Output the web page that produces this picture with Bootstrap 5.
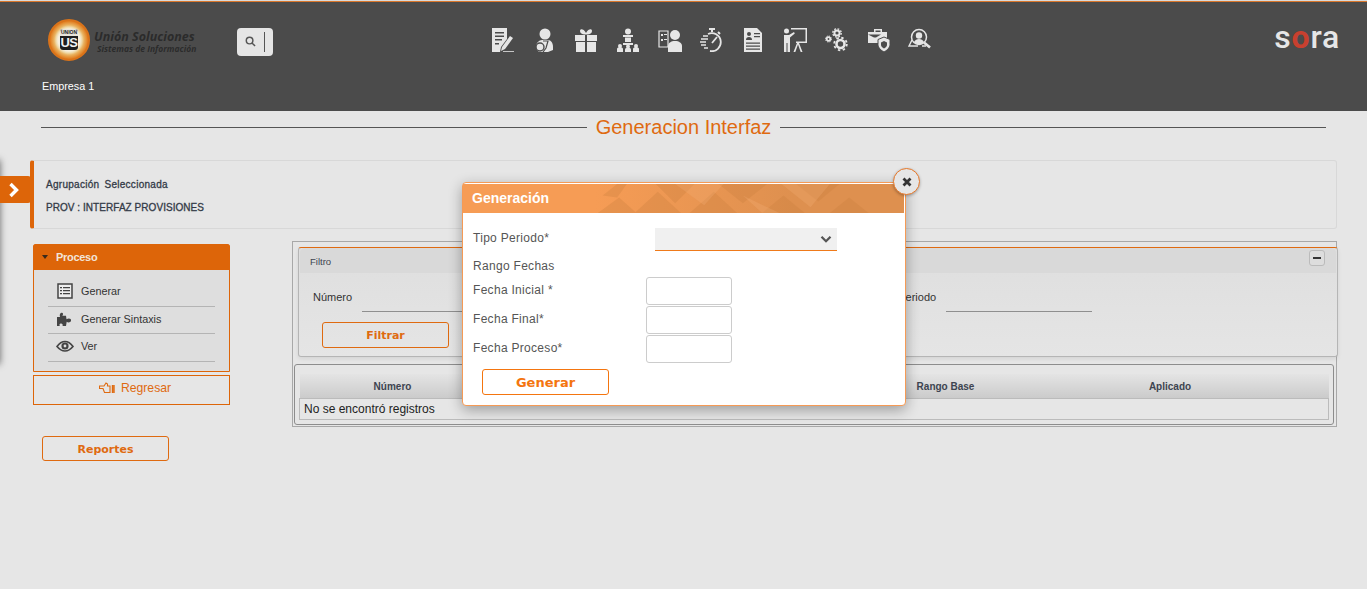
<!DOCTYPE html>
<html lang="es">
<head>
    <meta charset="UTF-8">
    <title>Generacion Interfaz</title>
    <link rel="stylesheet" href="https://cdn.jsdelivr.net/npm/bootstrap@5.3.0/dist/css/bootstrap.min.css">
    <style>
        body { background: #e6e6e6; font-family: "Liberation Sans", Arial, sans-serif; font-size: 12px; color: #333; position: relative; height: 589px; overflow: hidden; }
        .top-bar { height: 111px; background: #4b4b4b; border-top: 1px solid #d9d9d9; box-shadow: inset 0 1px 0 #d9772c; padding: 0 27px 0 42px; }
        .top-row { height: 77px; }
        .brand { width: 195px; margin-left: 6px; gap: 4px; }
        .brand-disc { width: 42px; height: 42px; flex: none; border-radius: 50%; background: radial-gradient(circle, #f6efdd 0 11px, #efd9a8 13px, #e9b25f 15px, #e07a1c 19px); border: 2px solid #d9731a; }
        .brand-mark { width: 18px; height: 21px; background: #1f1f1f; border-radius: 3px; overflow: hidden; text-align: center; }
        .brand-mark small { display: block; background: #e8e4da; color: #222; font-size: 5px; line-height: 7px; font-weight: 700; }
        .brand-mark span { display: block; color: #f2f2f2; font-size: 13px; line-height: 14px; font-weight: 700; letter-spacing: -.5px; }
        .brand-txt { margin-top: 4px; }
        .brand-name { color: #2b2b2b; font-weight: 700; font-style: italic; font-size: 12.5px; line-height: 13px; font-family: "Open Sans", sans-serif; white-space: nowrap; letter-spacing: 0; }
        .brand-sub { color: #2b2b2b; font-size: 8.5px; line-height: 11px; font-style: italic; font-weight: 700; font-family: "Open Sans", sans-serif; white-space: nowrap; margin-left: 3px; }
        .search-box { width: 36px; height: 28px; margin-left: -6px; margin-top: 4px; background: #e5e5e5; border-radius: 4px; padding-left: 8px; }
        .search-sep { width: 1px; height: 20px; background: #555; margin-left: 8px; }
        .menu-icons { gap: 17.8px; position: absolute; left: 490.5px; top: 27.5px; }
        .menu-icons svg { width: 24px; height: 24px; display: block; fill: #e6e6e6; }
        .menu-icons svg.ic-line { fill: none; stroke: #e6e6e6; }
        .sora-word { margin-left: auto; margin-top: -6px; font-family: Roboto, sans-serif; font-weight: 500; font-size: 32px; line-height: 1; color: #e6e6e6; letter-spacing: .8px; }
        .sora-word b { color: #c8402f; font-weight: 700; }
        .empresa { color: #fff; font-size: 10.8px; line-height: 13px; padding-top: 2px; }
        .title-row { height: 32px; padding: 0 41px; gap: 9px; }
        .title-row hr { flex: 1; margin: 0; border-top: 1px solid #555; opacity: 1; }
        .title-row h1 { font-size: 20px; font-weight: 400; color: #df6a10; margin: 0; line-height: 32px; font-family: "Liberation Sans", sans-serif; }
        .wrap-main { margin: 17px 30px 0; }
        .agrup { height: 69px; border: 1px solid #d8d8d8; border-left: 4px solid #dd6509; border-radius: 3px; padding: 18px 12px 0; font-size: 10px; color: #333a46; line-height: 12px; -webkit-text-stroke: .3px #333a46; }
        .agrup p { margin: 0 0 11px; }
        .agrup .t1 { word-spacing: 2px; letter-spacing: .28px; }
        .agrup .t2 { letter-spacing: .05px; }
        .edge-tab { position: absolute; left: 0; top: 176px; width: 31px; height: 27px; background: #dd6509; border-radius: 0 3px 3px 0; padding-right: 3px; }
        .edge-shadow { position: absolute; left: -10px; top: 160px; width: 10px; height: 204px; box-shadow: 0 0 7px rgba(0,0,0,.55); }
        .left-col { width: 197px; margin: 3px 0 0 3px; }
        .proc-box { height: 128px; border: 1px solid #dd6509; border-radius: 3px 3px 0 0; background: #dedede; }
        .proc-head { height: 26px; margin: -1px -1px 0; background: #dd6509; border-radius: 3px 3px 0 0; padding-left: 9px; color: #f2e4d8; font-weight: 700; font-size: 11px; letter-spacing: -.3px; gap: 8px; }
        .proc-caret { width: 0; height: 0; border: 3.5px solid transparent; border-top: 4px solid #3a2a1c; border-bottom: 0; }
        .proc-list { margin: 9px 14px 0; background: transparent; border-radius: 0; }
        .proc-list .list-group-item { background: transparent; border: 0; border-bottom: 1px solid #b4b4b4; border-radius: 0; height: 27.5px; padding: 0 0 2px 8px; font-size: 10.8px; color: #333; gap: 7px; }
        .proc-list .list-group-item svg { width: 18px; height: 16px; flex: none; }
        .back-box { height: 30px; margin-top: 3px; border: 1px solid #dd6509; color: #df6a10; font-size: 12.2px; gap: 6px; padding: 0 0 4px 7px; }
        .btn-outl { width: 127px; font-family: "DejaVu Sans", sans-serif; font-weight: 700; font-size: 11px; line-height: 1; color: #df6a10; border: 1px solid #df6a10; border-radius: 3px; background: transparent; padding: 1px 0 0; }
        .btn-rep { height: 25px; margin: 31px 0 0 9px; display: block; }
        .right-col { width: 1045px; height: 186px; margin-left: 62px; border: 1px solid #a8a8a8; padding: 5px 0 0 5px; }
        .filter-card { width: 1040px; height: 110px; border: 1px solid #b5b5b5; border-top-color: #df6a10; border-radius: 3px; background: linear-gradient(#dedede, #e5e5e5); box-shadow: 0 2px 4px rgba(0,0,0,.08); display: block; }
        .filter-head { height: 25px; margin: 0 1px; background: #d9d9d9; font-size: 9.5px; color: #3d4450; padding: 3px 11px 0 10px; border: 0; border-radius: 0; }
        .collapse-btn { width: 16px; height: 16px; border: 1px solid #bbb; border-radius: 3px; background: #ddd; margin-top: -1px; }
        .collapse-btn i { width: 8px; height: 2px; background: #333; display: block; }
        .filter-fields { height: 49px; padding-left: 14px; position: relative; font-size: 11px; }
        .filter-fields label { line-height: 14px; padding-top: 17px; }
        .under-a { width: 160px; height: 39px; border-bottom: 1px solid #8f8f8f; margin-left: 10px; }
        .under-b { width: 146px; height: 39px; border-bottom: 1px solid #8f8f8f; margin-left: 10px; }
        .periodo-lbl { margin-left: 296px; width: 118px; text-align: right; }
        .btn-filt { height: 26px; margin-left: 23px; display: block; }
        .table-box { width: 1040px; height: 61px; margin: 7px 0 0 -4px; border: 1px solid #8d8d8d; border-radius: 3px; padding: 9px 4px 0; }
        .table-box .table { width: 1029px; margin: 0; table-layout: fixed; --bs-table-bg: transparent; border-color: #bbb; }
        .table-box th { height: 24px; padding: 2px 0 0; border: 0; background: linear-gradient(#e4e4e4, #cbcbcb); font-size: 10px; text-align: center; color: #3d4450; vertical-align: middle; }
        .table-box td { height: 21px; padding: 0 4px; border: 1px solid #bbb; font-size: 12px; color: #222; vertical-align: middle; }
        .gen-modal { position: absolute; left: 462px; top: 182px; width: 444px; height: 224px; background: #fff; border: 1px solid #f59a55; border-radius: 4px; box-shadow: 0 4px 14px rgba(0,0,0,.32); padding-top: 1px; font-size: 12px; color: #555; z-index: 5; letter-spacing: .3px; }
        .gen-head { height: 29px; margin: 0 1px 0 0; background: linear-gradient(90deg, #f69c55 30%, #de904f 75%); color: #fff; font-weight: 700; font-size: 14px; padding-left: 9px; position: relative; overflow: hidden; letter-spacing: 0; }
        .gen-head svg { position: absolute; left: 130px; top: 0; width: 290px; height: 29px; }
        .gen-head span { position: relative; }
        .gen-close { position: absolute; right: -15px; top: -15px; width: 27px; height: 27px; border-radius: 50%; background: #e6e6e6; border: 1px solid #e8792a; box-shadow: 0 1px 3px rgba(0,0,0,.3); }
        .gen-body { padding: 15px 0 0 10px; }
        .gen-tipo { height: 24px; }
        .gen-tipo label { width: 182px; padding-bottom: 5px; }
        .gen-tipo .form-select { width: 182px; height: 22px; margin-bottom: 2px; padding: 0 8px; background-color: #f0f0f0; background-image: url("data:image/svg+xml,%3csvg xmlns='http://www.w3.org/2000/svg' viewBox='0 0 16 16'%3e%3cpath fill='none' stroke='%23555' stroke-width='3' d='M2 5l6 6 6-6'/%3e%3c/svg%3e"); background-size: 12px 12px; border: 0; border-radius: 0; box-shadow: 0 1px 0 #ef7a1a; font-size: 12px; background-position: right 5px center; }
        .gen-rango { margin-top: 7px; height: 15px; line-height: 15px; }
        .gen-dates { margin-top: 3px; display: grid; grid-template-columns: 173px 86px; grid-auto-rows: 28px; row-gap: 1px; align-items: center; }
        .gen-dates label { padding-bottom: 2px; }
        .gen-dates .form-control { height: 28px; width: 86px; border: 1px solid #ccc; border-radius: 3px; min-height: 0; padding: 0; }
        .btn-gen { height: 26px; margin: 6px 0 0 9px; display: block; font-size: 13px; color: #f4750f; border-color: #f4750f; }
    </style>
</head>
<body>
    <div class="top-bar">
        <div class="top-row d-flex align-items-center">
            <div class="brand d-flex align-items-center">
                <div class="brand-disc d-flex align-items-center justify-content-center">
                    <div class="brand-mark"><small>UNION</small><span>US</span></div>
                </div>
                <div class="brand-txt">
                    <div class="brand-name">Unión Soluciones</div>
                    <div class="brand-sub">Sistemas de Información</div>
                </div>
            </div>
            <div class="search-box d-flex align-items-center">
                <svg width="11" height="11" viewBox="0 0 12 12" fill="none" stroke="#555" stroke-width="1.6"><circle cx="5" cy="5" r="3.6"/><path d="M7.6 7.6 11 11"/></svg>
                <span class="search-sep"></span>
            </div>
            <div class="menu-icons d-flex">
                <svg viewBox="0 0 24 24"><path d="M1 0h15v11l-6 8-1 5H1z"/><path d="M4 4h9v1.400H4zM4 7.500h9v1.400H4zM4 11h7v1.400H4zM4 15h4v1.400H4z" fill="#4b4b4b"/><path d="M19 8l3 2-8 11-4 2 1-4z"/><path d="M12 23h11v.8H12z"/></svg>
                <svg viewBox="0 0 24 24"><circle cx="13" cy="6" r="5.500"/><path d="M7 24c-2-2-3-3-3-5 0-4 3-7 6-7h6c3 0 5 3 5 7v3l-5 2z"/><circle cx="8" cy="19" r="4" fill="none" stroke="#4b4b4b" stroke-width="1.400"/><path d="M11 13l5 0-2 7-3 4" fill="none" stroke="#4b4b4b" stroke-width="1.200"/></svg>
                <svg viewBox="0 0 24 24"><path d="M1 7h10v6H1zM13 7h10v6H13zM2 14h9v10H2zM13 14h9v10h-9z"/><path d="M11 6.500C8 6.500 6 5 6 3 6 .5 9.500.5 12 5c2.500-4.500 6-4.500 6-2 0 2-2 3.500-5 3.500z"/></svg>
                <svg viewBox="0 0 24 24"><circle cx="12" cy="3.500" r="3"/><path d="M7 7h10v2H7zM9 9.500h6V14H9z"/><path d="M7 15h10v2H7z"/><circle cx="4" cy="18" r="2"/><path d="M1 21c0-1 1-2 3-2s3 1 3 2v3H1z"/><circle cx="12" cy="18.500" r="2"/><path d="M9 21.500c0-1 1-2 3-2s3 1 3 2V24H9z"/><circle cx="20" cy="18" r="2"/><path d="M17 21c0-1 1-2 3-2s3 1 3 2v3h-6z"/></svg>
                <svg viewBox="0 0 24 24"><circle cx="17" cy="7" r="5"/><path d="M10 24v-6c0-3 3-5 7-5s7 2 7 5v6z"/><path d="M1 3h9v16H1z" fill="none" stroke="#e6e6e6" stroke-width="1.200"/><path d="M3 6h2v2H3zM6 6h3v1H6zM3 11h2v2H3zM6 11h3v1H6z"/></svg>
                <svg class="ic-line" viewBox="0 0 24 24"><path d="M10 1h6M13 1v3M19 4l2 2" stroke-width="2"/><path d="M9 6a9 9 0 1 1 2 17" stroke-width="1.800"/><path d="M13 15l5-6" stroke-width="1.800"/><path d="M4 8h5M2 11h7M1 14h6M2 17h5M5 20h4" stroke-width="1.400"/></svg>
                <svg viewBox="0 0 24 24"><path d="M3 0h13l5 5v19H3z"/><circle cx="8" cy="6" r="2" fill="#4b4b4b"/><path d="M5 12c0-2 1-3 3-3s3 1 3 3zM13 5h6v1.200h-6zM13 8h6v1.200h-6zM5 14.500h14v1.200H5zM5 17.500h14v1.200H5zM5 20.500h14v1.200H5z" fill="#4b4b4b"/></svg>
                <svg viewBox="0 0 24 24"><circle cx="3.500" cy="3" r="2.500"/><path d="M1 7h5l5-3 .8 1.400L7 9.500V24H4.500v-9H3.500v9H1z"/><path d="M8 0h16v15H13v-1.500h9.500v-12H8z"/><path d="M14 15l-3.500 9h1.800L15 16.500 17.700 24h1.800L16 15z"/></svg>
                <svg class="ic-line" viewBox="0 0 24 24"><circle cx="12" cy="5" r="2.600" stroke-width="2"/><circle cx="12" cy="5" r="4.200" stroke-width="1.400" stroke-dasharray="1.800 1.500"/><circle cx="3.500" cy="11" r="1.800" stroke-width="1.800"/><circle cx="3.500" cy="11" r="3" stroke-width="1" stroke-dasharray="1.300 1.050"/><circle cx="15.500" cy="16" r="4" stroke-width="2.600"/><circle cx="15.500" cy="16" r="6.300" stroke-width="1.800" stroke-dasharray="2.400 2.550"/></svg>
                <svg viewBox="0 0 24 24"><path d="M7 1h8v3h5v7h-7l-1 4H1V4h6zm1.500 1.500V4h5V2.500z" fill-rule="evenodd"/><path d="M1 6.500h13l-5 3-2 0z" fill="#4b4b4b"/><path d="M17 9l6 2.500v5c0 3-3 6-6 7.500-3-1.500-6-4.500-6-7.500v-5z" stroke="#4b4b4b"/><path d="M17 13l3 1.500v2.500c0 1.500-1.500 2.500-3 3.500-1.500-1-3-2-3-3.500v-2.500z" fill="#4b4b4b"/></svg>
                <svg class="ic-line" viewBox="0 0 24 24"><circle cx="11" cy="9" r="7.500" stroke-width="1.500"/><circle cx="11" cy="7.500" r="3.200" fill="#e6e6e6" stroke="none"/><path d="M6 14c1-2 3-3 5-3s4 1 5 3c-1 1.500-3 2.500-5 2.500S7 15.500 6 14z" fill="#e6e6e6" stroke="none"/><path d="M16 14.500l6 5" stroke-width="2.600"/><path d="M4 12L1 18h9M14 18h4" stroke-width="1.400"/></svg>
            </div>
            <div class="sora-word">s<b>o</b>ra</div>
        </div>
        <div class="empresa">Empresa 1</div>
    </div>

    <div class="title-row d-flex align-items-center">
        <hr>
        <h1>Generacion Interfaz</h1>
        <hr>
    </div>

    <div class="edge-shadow"></div>
    <div class="edge-tab d-flex align-items-center justify-content-center">
        <svg width="12" height="16" viewBox="0 0 12 16" fill="none" stroke="#fff" stroke-width="3.400"><path d="M2.500 2 8.500 8l-6 6"/></svg>
    </div>

    <div class="wrap-main">
        <div class="agrup">
            <p class="t1">Agrupación Seleccionada</p>
            <p class="t2">PROV : INTERFAZ PROVISIONES</p>
        </div>

        <div class="d-flex" style="margin-top:12px">
            <div class="left-col">
                <div class="proc-box">
                    <div class="proc-head d-flex align-items-center"><span class="proc-caret"></span>Proceso</div>
                    <div class="list-group proc-list">
                        <div class="list-group-item d-flex align-items-center">
                            <svg viewBox="0 0 18 16"><path d="M2 1h14v14H2z" fill="#eee" stroke="#444" stroke-width="1.500"/><path d="M4 4h2v1.300H4zM7 4h7v1.300H7zM4 7h2v1.300H4zM7 7h7v1.300H7zM4 10h2v1.300H4zM7 10h7v1.300H7z" fill="#444"/></svg>
                            Generar
                        </div>
                        <div class="list-group-item d-flex align-items-center">
                            <svg viewBox="0 0 18 16"><path d="M1 6h3c-1-3 1-5 2.500-4 1 .7.500 2-.2 2.800H10l.5 3.500c2-1.500 5-1 4.500 1.500-.4 1.800-3 2-4.300 1L10 15H6.500c.8-1.500-.5-3-2-2.500-1.300.4-1.300 2-.5 2.500H1z" fill="#444"/></svg>
                            Generar Sintaxis
                        </div>
                        <div class="list-group-item d-flex align-items-center">
                            <svg viewBox="0 0 18 16"><path d="M1 8.500C3.500 5 6 3.500 9 3.500s5.500 1.500 8 5c-2.500 3-5 4.500-8 4.500s-5.500-1.500-8-4.500z" fill="none" stroke="#444" stroke-width="1.600"/><circle cx="9" cy="8" r="3.600" fill="#444"/><circle cx="9" cy="8" r="1.400" fill="#dedede"/></svg>
                            Ver
                        </div>
                    </div>
                </div>
                <div class="back-box d-flex align-items-center justify-content-center">
                    <svg width="16" height="12" viewBox="0 0 16 12" fill="none" stroke="#df6a10" stroke-width="1.100"><path d="M.5 4H5l2-3 1.500 1V4H11v6.500H5.500L4 6.500H.5z"/><path d="M13.500 3v8M15 3v8" stroke-width="1.400"/></svg>
                    Regresar
                </div>
                <button type="button" class="btn btn-outl btn-rep">Reportes</button>
            </div>

            <div class="right-col">
                <div class="card filter-card">
                    <div class="card-header filter-head d-flex align-items-center justify-content-between">
                        <span>Filtro</span>
                        <span class="collapse-btn d-flex align-items-center justify-content-center align-self-start"><i></i></span>
                    </div>
                    <div class="filter-fields d-flex">
                        <label>Número</label>
                        <div class="under-a"></div>
                        <label class="periodo-lbl">Periodo</label>
                        <div class="under-b"></div>
                    </div>
                    <button type="button" class="btn btn-outl btn-filt">Filtrar</button>
                </div>
                <div class="table-box">
                    <table class="table">
                        <colgroup><col style="width:186px"><col style="width:335px"><col style="width:250px"><col style="width:199px"><col style="width:59px"></colgroup>
                        <thead><tr><th>Número</th><th>Descripción</th><th>Rango Base</th><th>Aplicado</th><th></th></tr></thead>
                        <tbody><tr><td colspan="5">No se encontró registros</td></tr></tbody>
                    </table>
                </div>
            </div>
        </div>
    </div>

    <div class="gen-modal">
        <div class="gen-head d-flex align-items-center">
            <svg viewBox="0 0 290 30" fill="#c9803f" fill-opacity=".32">
                <path d="M5 12 20 0h10l-10 14zM0 30l22-16 18 16zM38 30 62 8l24 22zM60 0h40L80 20zM95 30l25-22 24 22zM125 0h50l-25 20zM170 30l22-18 22 18zM205 0h45l-22 18zM240 30l20-16 20 16z"/>
                <path d="M80 0 110 22l20-22zM150 12l20 18h18zM190 0l30 24 20-24z" fill="#f7b27a" fill-opacity=".25"/>
            </svg>
            <span>Generación</span>
        </div>
        <div class="gen-close d-flex align-items-center justify-content-center">
            <svg width="10" height="10" viewBox="0 0 10 10" stroke="#333" stroke-width="2.800"><path d="M1.500 1.500l7 7M8.500 1.500l-7 7"/></svg>
        </div>
        <div class="gen-body">
            <div class="gen-tipo d-flex align-items-center">
                <label>Tipo Periodo*</label>
                <select class="form-select"><option></option></select>
            </div>
            <div class="gen-rango">Rango Fechas</div>
            <div class="gen-dates">
                <label>Fecha Inicial *</label><input type="text" class="form-control">
                <label>Fecha Final*</label><input type="text" class="form-control">
                <label>Fecha Proceso*</label><input type="text" class="form-control">
            </div>
            <button type="button" class="btn btn-outl btn-gen">Generar</button>
        </div>
    </div>

    <script src="https://cdn.jsdelivr.net/npm/bootstrap@5.3.0/dist/js/bootstrap.bundle.min.js"></script>
</body>
</html>
